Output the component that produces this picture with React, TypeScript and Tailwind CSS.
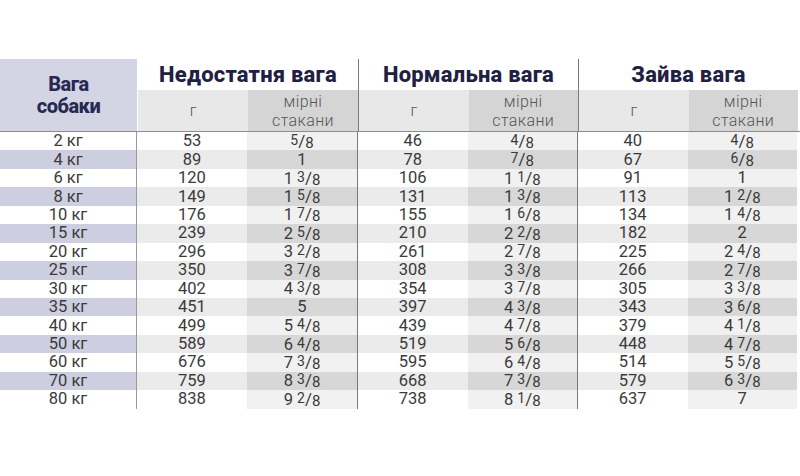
import React from "react";

type Row = [string, string, string, string, string, string, string];

const rows: Row[] = [
  ["2", "53", "5/8", "46", "4/8", "40", "4/8"],
  ["4", "89", "1", "78", "7/8", "67", "6/8"],
  ["6", "120", "1 3/8", "106", "1 1/8", "91", "1"],
  ["8", "149", "1 5/8", "131", "1 3/8", "113", "1 2/8"],
  ["10", "176", "1 7/8", "155", "1 6/8", "134", "1 4/8"],
  ["15", "239", "2 5/8", "210", "2 2/8", "182", "2"],
  ["20", "296", "3 2/8", "261", "2 7/8", "225", "2 4/8"],
  ["25", "350", "3 7/8", "308", "3 3/8", "266", "2 7/8"],
  ["30", "402", "4 3/8", "354", "3 7/8", "305", "3 3/8"],
  ["35", "451", "5", "397", "4 3/8", "343", "3 6/8"],
  ["40", "499", "5 4/8", "439", "4 7/8", "379", "4 1/8"],
  ["50", "589", "6 4/8", "519", "5 6/8", "448", "4 7/8"],
  ["60", "676", "7 3/8", "595", "6 4/8", "514", "5 5/8"],
  ["70", "759", "8 3/8", "668", "7 3/8", "579", "6 3/8"],
  ["80", "838", "9 2/8", "738", "8 1/8", "637", "7"],
];

const groups = ["Недостатня вага", "Нормальна вага", "Зайва вага"];

function Cups({ value }: { value: string }) {
  const parts = value.split(" ");
  const frac = parts.find((p) => p.includes("/"));
  const whole = parts.find((p) => !p.includes("/"));
  return (
    <span className="whitespace-nowrap">
      {whole && <span>{whole}</span>}
      {whole && frac && <span> </span>}
      {frac && (
        <span>
          <span className="text-[14px] align-[2px]">{frac.split("/")[0]}</span>
          <span className="text-[17px]">/</span>
          <span className="text-[15px] align-[-1px]">{frac.split("/")[1]}</span>
        </span>
      )}
    </span>
  );
}

export default function App() {
  return (
    <div
      className="w-[800px] h-[476px] bg-white pt-[59px] text-[#3a3a3a]"
      style={{ fontFamily: "Roboto, 'Noto Sans', sans-serif" }}
    >
      {/* header */}
      <div className="flex border-b border-[#8c8c8c]">
        <div className="w-[137px] h-[72px] bg-[#d4d5e4] flex flex-col items-center justify-center text-[20px] font-extrabold leading-[22px] text-[#262a52] tracking-tight">
          <span>Вага</span>
          <span>собаки</span>
        </div>
        {groups.map((g, i) => (
          <div
            key={g}
            className={
              "w-[220px] flex flex-col " +
              (i > 0 ? "border-l border-[#7a7a7a]" : "ml-[1px]")
            }
          >
            <div className="h-[31px] flex items-center justify-center text-[22px] font-extrabold text-[#1e2142] tracking-[0.2px]">
              {g}
            </div>
            <div className="h-[41px] flex">
              <div className="w-[110px] bg-[#e8e8e8] flex items-center justify-center text-[16px] font-light text-[#555]">
                г
              </div>
              <div className="w-[110px] bg-[#d5d5d5] flex flex-col items-center justify-center text-[16px] font-light leading-[19px] text-[#555] tracking-wide">
                <span>мірні</span>
                <span>стакани</span>
              </div>
            </div>
          </div>
        ))}
      </div>

      {/* body */}
      {rows.map((r, idx) => {
        const odd = idx % 2 === 1;
        return (
          <div key={r[0]} className="flex h-[18.45px] text-[16.5px] leading-[18px]">
            <div
              className={
                "w-[137px] flex items-center justify-center border-r border-[#9a9a9a] " +
                (odd ? "bg-[#cdcedf]" : "bg-white")
              }
            >
              {r[0]} кг
            </div>
            {[0, 1, 2].map((gi) => (
              <div
                key={gi}
                className={"w-[220px] flex " + (gi > 0 ? "border-l border-[#7a7a7a]" : "")}
              >
                <div
                  className={
                    "w-[110px] flex items-center justify-center " +
                    (odd ? "bg-[#ebebeb]" : "bg-white")
                  }
                >
                  {r[1 + gi * 2]}
                </div>
                <div
                  className={
                    "w-[110px] flex items-center justify-center " +
                    (odd ? "bg-[#d7d7d7]" : "bg-[#f1f1f1]")
                  }
                >
                  <Cups value={r[2 + gi * 2]} />
                </div>
              </div>
            ))}
          </div>
        );
      })}
    </div>
  );
}
